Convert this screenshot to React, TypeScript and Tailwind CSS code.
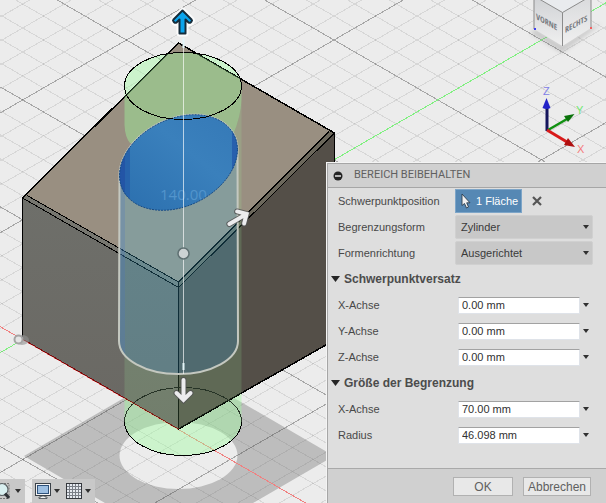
import type { ReactNode } from "react";

const SLOPE = 0.5775;
const STEP = 23.97;

function gridLines() {
  const lines: ReactNode[] = [];
  for (let k = -22; k <= 46; k++) {
    const y = 40 + k * STEP;
    const falling = { x1: -66, y1: y - 400 * SLOPE, x2: 734, y2: y + 400 * SLOPE };
    const rising = { x1: -66, y1: y + 400 * SLOPE, x2: 734, y2: y - 400 * SLOPE };
    const major = k % 5 === 0;
    const tone = major ? "rgba(70,70,70,0.42)" : "rgba(90,90,90,0.14)";
    lines.push(<line key={`f${k}`} {...falling} stroke={k === 20 ? "#f08080" : tone} />);
    lines.push(<line key={`r${k}`} {...rising} stroke={k === 5 ? "#80f080" : tone} />);
  }
  return lines;
}

function slantedEllipse(from: number, to: number) {
  const points: string[] = [];
  for (let i = 0; i <= 80; i++) {
    const t = ((from + ((to - from) * i) / 80) * Math.PI) / 180;
    const x = 178.5 + 59 * Math.cos(t);
    const y = 162.5 - 13 * Math.cos(t) + 46 * Math.sin(t);
    points.push(`${x.toFixed(2)} ${y.toFixed(2)}`);
  }
  return points.join(" L ");
}

const hole = `M ${slantedEllipse(0, 360)} Z`;
const tubeOutline = `M ${slantedEllipse(180, 360)} L 238 341 A 59.5 33 0 0 1 119 341 Z`;
const tubeBody = `M ${slantedEllipse(180, 0)} L 238 341 A 59.5 33 0 0 1 119 341 Z`;

function Manipulator({ x, y }: { x: number; y: number }) {
  const shape = "M -3 12 L -3 -2 L -6 1 Q -8 2 -9 0 Q -10 -1 -9 -2 L 0 -11 L 9 -2 Q 10 -1 9 0 Q 8 2 6 1 L 3 -2 L 3 12 Z";
  return (
    <g transform={`translate(${x} ${y})`} strokeLinejoin="round">
      <path d={shape} fill="none" stroke="#ffffff" strokeWidth="6" opacity="0.85" />
      <path d={shape} fill="#0ba4ec" stroke="#152c3b" strokeWidth="2" />
    </g>
  );
}

function SmallArrow({ x, y, angle }: { x: number; y: number; angle: number }) {
  const d = "M 0 10 L 0 -9 M -7 -3 L 0 -10 L 7 -3";
  return (
    <g transform={`translate(${x} ${y}) rotate(${angle})`} fill="none" strokeLinecap="round">
      <path d={d} stroke="#555656" strokeWidth="6" opacity="0.85" />
      <path d={d} stroke="#ececee" strokeWidth="4" />
    </g>
  );
}

function ViewCube() {
  return (
    <g>
      <path d="M 536 29 L 562 45 L 589 28 L 601 24 L 562 53 L 530 33 Z" fill="#888" opacity="0.35" filter="url(#soft)" />
      <path d="M 534 -4 L 562.5 12.5 L 562.5 46 L 534 29 Z" fill="url(#cubeLeft)" />
      <path d="M 562.5 12.5 L 591 -4 L 591 28 L 562.5 46 Z" fill="url(#cubeRight)" />
      <path d="M 534 -4 L 562.5 12.5 L 591 -4 Z" fill="#e9ebee" />
      <path d="M 534 -4 V 29 M 534 -4 L 562.5 12.5 L 591 -4 V 28 M 562.5 12.5 V 46" fill="none" stroke="#8b8b8b" />
      <g fontSize="8" fontWeight="700" fill="#777b80" className="font-['Liberation_Sans_Narrow','Open_Sans_Condensed','Roboto',sans-serif]">
        <text transform="translate(536 19) skewY(29)">VORNE</text>
        <text transform="translate(565 33) skewY(-29)">RECHTS</text>
      </g>
      <rect x="534" y="28" width="2" height="2" fill="#4040f0" />
      <rect x="590" y="27" width="2" height="2" fill="#f06060" />
    </g>
  );
}

function AxisTriad() {
  return (
    <g fontSize="11">
      <path d="M 547 131 V 107" stroke="#15155c" strokeWidth="3" />
      <path d="M 542.5 108 Q 546.5 110 550.5 108 L 546.5 98 Z" fill="#2222c8" />
      <path d="M 548 130 L 567 119" stroke="#109010" strokeWidth="2.5" />
      <path d="M 564 116 L 574.5 114 L 568 122 Z" fill="#0b720b" />
      <path d="M 547 130 L 567 142" stroke="#d81a1a" strokeWidth="3" />
      <path d="M 568 138 L 575 147 L 564 145 Z" fill="#b01010" />
      <text x="543" y="95" fill="#8080e6">Z</text>
      <text x="576" y="114" fill="#70e870">Y</text>
      <text x="577" y="153" fill="#f47c7c">X</text>
    </g>
  );
}

function Scene() {
  return (
    <svg className="absolute left-0 top-0 font-['Liberation_Sans',sans-serif]" width="1600" height="1200" viewBox="0 0 1600 1200" aria-label="3D">
      <defs>
        <filter id="soft"><feGaussianBlur stdDeviation="2" /></filter>
        <filter id="edge"><feGaussianBlur stdDeviation="0.7" /></filter>
        <linearGradient id="cubeLeft" x1="0" y1="0" x2="0" y2="1"><stop offset="0" stopColor="#cfd1d4" /><stop offset="1" stopColor="#f0f0f0" /></linearGradient>
        <linearGradient id="cubeRight" x1="0" y1="0" x2="0" y2="1"><stop offset="0" stopColor="#d9dadc" /><stop offset="1" stopColor="#f0f0f0" /></linearGradient>
        <linearGradient id="blue" x1="0" y1="1" x2="1" y2="0"><stop offset="0" stopColor="#2b6fae" /><stop offset="0.6" stopColor="#3a80bc" /><stop offset="1" stopColor="#3579b7" /></linearGradient>
        <linearGradient id="left" x1="0" y1="0" x2="0" y2="1"><stop offset="0" stopColor="#6e6f6a" /><stop offset="1" stopColor="#6a6863" /></linearGradient>
        <clipPath id="holeClip"><path d={hole} /></clipPath>
        <clipPath id="bodyClip"><path d="M 22.5 198 L 178.5 43 L 334.5 133 L 334.5 340 L 178.5 429 L 22.5 339 Z" /></clipPath>
      </defs>

      <g filter="url(#edge)">
        <path d="M 24 456 L 179 366 L 334 456 L 179 546 Z" fill="#bdbdbd" />
        <ellipse cx="178.5" cy="455.5" rx="59" ry="33.5" fill="#ececec" />
      </g>
      <g shapeRendering="crispEdges">{gridLines()}</g>

      <path d="M 124.5 86 A 58.5 33.5 0 0 1 241.5 86 V 421.5 A 58.5 34 0 0 1 124.5 421.5 Z" fill="rgba(158,255,158,0.4)" />

      <path d="M 22.5 198 L 178.5 43 L 334.5 133 L 178.5 287.5 Z" fill="#998f81" />
      <path d="M 22.5 198 L 178.5 287.5 V 429 L 22.5 339 Z" fill="url(#left)" />
      <path d="M 178.5 287.5 L 334.5 133 V 340 L 178.5 429 Z" fill="#544f48" />
      <path d="M 22.5 198 L 27 195.5 L 178.5 282 V 287.5 Z" fill="#777770" />
      <path d="M 178.5 282 L 329 131.5 L 334.5 133 L 178.5 287.5 Z" fill="#6c685c" />
      <g fill="none" stroke="#000" shapeRendering="crispEdges">
        <path d="M 22.5 339 V 198 L 178.5 43 L 334.5 133 V 340 L 178.5 429 V 282" strokeWidth="1.5" />
        <path d="M 27 195.5 L 178.5 282 L 329 131.5 M 22.5 198 L 178.5 287.5 L 334.5 133" />
        <path d="M 22.5 339 L 178.5 429" stroke="#7a1010" />
      </g>

      <g clipPath="url(#bodyClip)">
        <path d="M 124.5 86 A 58.5 33.5 0 0 1 241.5 86 V 100 Q 241 116 233 135 L 183 155 L 130 143 Q 125 137 124.5 125 Z" fill="rgba(158,255,158,0.4)" />
        <path d="M 233 135 Q 241 116 241.5 100 V 421.5 A 58.5 34 0 0 1 124.5 421.5 V 355 A 59.5 33 0 0 0 238 341 V 150 Z" fill="rgba(158,255,158,0.15)" />
      </g>
      <path d="M 119 345 V 176 L 125 182 V 355 Z" fill="rgba(80,90,180,0.25)" />
      <path d={tubeBody} fill="rgba(67,207,250,0.22)" />
      <path d={tubeOutline} fill="none" stroke="#c4c8c0" strokeWidth="2" />
      <path d={hole} fill="url(#blue)" />
      <g clipPath="url(#holeClip)">
        <rect x="118" y="110" width="7" height="100" fill="#2355a6" />
        <rect x="125" y="110" width="5" height="100" fill="#2763ac" />
        <rect x="232" y="110" width="6" height="100" fill="#2860ad" />
        <text x="160" y="200" fontSize="15" fill="#5294cc" className="font-['Open_Sans',sans-serif]">140.00</text>
      </g>
      <path d={hole} fill="none" stroke="#164b85" strokeDasharray="2 1" />

      <g fill="none" stroke="#000" shapeRendering="crispEdges">
        <ellipse cx="183" cy="86" rx="58.5" ry="33.5" />
        <path d="M 124.5 421.5 A 58.5 34 0 0 0 241.5 421.5" />
        <path d="M 124.5 421.5 A 58.5 34 0 0 1 241.5 421.5" stroke="#263326" />
      </g>

      <path d="M 183.5 38 V 374" stroke="#fff" strokeOpacity="0.65" />
      <path d="M 183.5 38 V 48 M 183.5 363 V 370" stroke="#e4f5f8" strokeWidth="2" />
      <circle cx="183.5" cy="253.5" r="5.5" fill="#ccd2d3" stroke="#5f7072" strokeWidth="1.5" />
      <ellipse cx="22" cy="340" rx="7" ry="5" fill="#909090" opacity="0.6" />
      <circle cx="18.5" cy="339.5" r="4" fill="#e5e5e5" stroke="#a5a5a5" strokeWidth="2" />

      <Manipulator x={182.5} y={21.5} />
      <SmallArrow x={238} y={219} angle={60} />
      <SmallArrow x={183.5} y={390} angle={180} />
      <ViewCube />
      <AxisTriad />
    </svg>
  );
}

function Caret({ className = "" }: { className?: string }) {
  return (
    <svg className={className} width="6" height="4" viewBox="0 0 6 4" aria-hidden="true">
      <path d="M 0 0 H 6 L 3 4 Z" fill="#303030" />
    </svg>
  );
}

function Row({ label, id, children }: { label: string; id: string; children: ReactNode }) {
  return (
    <div className="flex h-[26px] items-center pl-[10px]">
      <label htmlFor={id} className="w-[117px] shrink-0">{label}</label>
      {children}
    </div>
  );
}

function Choice({ label, id, value }: { label: string; id: string; value: string }) {
  return (
    <Row label={label} id={id}>
      <div className="relative mr-[13px] flex-1">
        <select id={id} defaultValue={value} className="block h-6 w-full appearance-none rounded-xs border border-[#d0d0d0] bg-[#c8c8c8] px-[5px] text-[#3a3a3a] outline-none">
          <option>{value}</option>
        </select>
        <Caret className="pointer-events-none absolute right-1 top-[10px]" />
      </div>
    </Row>
  );
}

function Measure({ label, id, value }: { label: string; id: string; value: string }) {
  return (
    <Row label={label} id={id}>
      <div className="mr-[14px] flex min-w-0 flex-1 items-center pl-[3px]">
        <input id={id} type="text" defaultValue={value} className="h-[17px] min-w-0 flex-1 border border-[#dfe3e9] border-t-[#a2a2a2] bg-white px-[3px] text-[#303030] outline-none" />
        <button type="button" aria-label={label} className="flex w-3 justify-center"><Caret /></button>
      </div>
    </Row>
  );
}

function Heading({ children }: { children: ReactNode }) {
  return (
    <h2 className="flex h-[26px] items-center gap-1 pl-[3px] text-[12px] font-bold text-[#4c4c4c]">
      <svg width="9" height="6" viewBox="0 0 9 6" aria-hidden="true"><path d="M 0 0 H 9 L 4.5 6 Z" fill="#262626" /></svg>
      {children}
    </h2>
  );
}

function Dialog() {
  return (
    <section className="absolute right-0 top-[162px] flex h-[341px] w-[280px] flex-col border-l border-t border-[#f4f4f4] font-['Liberation_Sans',Arial,sans-serif] text-[11px] text-[#484848]">
      <header className="flex h-[25px] shrink-0 items-center gap-[11px] border border-r-0 border-[#a6a6a6] bg-[#d0d0d0] pl-[5px]">
        <button type="button" aria-label="Minimieren">
          <svg className="block" width="10" height="10" viewBox="0 0 10 10"><circle cx="5" cy="5" r="4.5" fill="#242424" /><path d="M 2 5 H 8" stroke="#e4e4e4" strokeWidth="1.5" /></svg>
        </button>
        <h1 className="font-['Roboto',sans-serif] text-[11px] text-[#606060]">BEREICH BEIBEHALTEN</h1>
      </header>
      <form className="flex flex-1 flex-col border-l border-[#a6a6a6] bg-[#dedede]">
        <div className="flex-1">
          <Row label="Schwerpunktposition" id="centroid">
            <button id="centroid" type="button" className="flex h-6 w-[67px] items-center gap-[5px] border border-[#7da5c8] bg-[#5688b4] pl-[5px] whitespace-nowrap text-white">
              <svg width="10" height="16" viewBox="0 0 10 16" aria-hidden="true"><path d="M 1 1 V 12.5 L 3.5 10.5 L 5.5 15 L 7.5 14 L 5.7 9.8 H 9 Z" fill="#f1f1f1" stroke="#2c3c4c" strokeWidth="0.9" /></svg>
              1 Fläche
            </button>
            <button type="button" aria-label="Auswahl aufheben" className="ml-[10px]">
              <svg className="block" width="10" height="10" viewBox="0 0 10 10"><path d="M 1 1 L 9 9 M 9 1 L 1 9" stroke="#555" strokeWidth="2.2" /></svg>
            </button>
          </Row>
          <Choice label="Begrenzungsform" id="shape" value="Zylinder" />
          <Choice label="Formenrichtung" id="direction" value="Ausgerichtet" />
          <Heading>Schwerpunktversatz</Heading>
          <Measure label="X-Achse" id="offset-x" value="0.00 mm" />
          <Measure label="Y-Achse" id="offset-y" value="0.00 mm" />
          <Measure label="Z-Achse" id="offset-z" value="0.00 mm" />
          <Heading>Größe der Begrenzung</Heading>
          <Measure label="X-Achse" id="size-x" value="70.00 mm" />
          <Measure label="Radius" id="radius" value="46.098 mm" />
        </div>
        <footer className="flex h-[35px] items-start justify-end gap-[10px] border-t border-[#a9a9a9] bg-[#d0d0d0] pr-[15px] pt-2 text-[12px] text-[#606060]">
          <button type="submit" className="h-[19px] w-[60px] border border-[#b1b1b1] bg-[#e8e8e8] leading-none">OK</button>
          <button type="button" className="h-[19px] w-[68px] border border-[#b1b1b1] bg-[#e8e8e8] leading-none">Abbrechen</button>
        </footer>
      </form>
    </section>
  );
}

function ViewBar() {
  return (
    <nav className="absolute bottom-0 left-0 flex h-6 gap-[7px]">
      <button type="button" aria-label="Zoom" className="flex w-[25px] items-center justify-end gap-[5px] overflow-hidden bg-[#c8c8c8] pr-1">
        <svg className="shrink-0" width="20" height="18" viewBox="0 0 20 18">
          <path d="M 8 1.5 H 19 V 16.5 H 8" fill="none" stroke="#777" strokeDasharray="2 1" />
          <circle cx="12" cy="7.5" r="6" fill="#d8eff0" stroke="#5c6265" strokeWidth="1.2" />
          <path d="M 15 11.5 L 19 16" stroke="#303438" strokeWidth="3" />
        </svg>
        <Caret className="shrink-0" />
      </button>
      <div className="flex items-center gap-[6px] bg-[#c8c8c8] pl-[3px] pr-1">
        <button type="button" aria-label="Anzeige" className="flex items-center gap-[3px]">
          <svg width="16" height="16" viewBox="0 0 16 16">
            <rect x="0.5" y="0.5" width="15" height="12" fill="#f3f3f3" stroke="#3a4148" />
            <rect x="2.5" y="2.5" width="11" height="8" fill="#9dbfe2" stroke="#2f527b" />
            <path d="M 6 13 H 10 V 14 H 12 V 15.5 H 4 V 14 H 6 Z" fill="#f3f3f3" stroke="#3a4148" strokeWidth="0.8" />
          </svg>
          <Caret />
        </button>
        <button type="button" aria-label="Raster" className="flex items-center gap-[3px]">
          <svg width="16" height="16" viewBox="0 0 16 16">
            <rect x="0.5" y="0.5" width="15" height="15" fill="#e6eaf0" stroke="#35383d" />
            <path d="M 3.5 1 V 15 M 6.5 1 V 15 M 9.5 1 V 15 M 12.5 1 V 15 M 1 3.5 H 15 M 1 6.5 H 15 M 1 9.5 H 15 M 1 12.5 H 15" stroke="#7a7f87" />
          </svg>
          <Caret />
        </button>
      </div>
    </nav>
  );
}

export default function App() {
  return (
    <main className="relative h-screen overflow-hidden bg-[#ececec]">
      <Scene />
      <ViewBar />
      <Dialog />
    </main>
  );
}
